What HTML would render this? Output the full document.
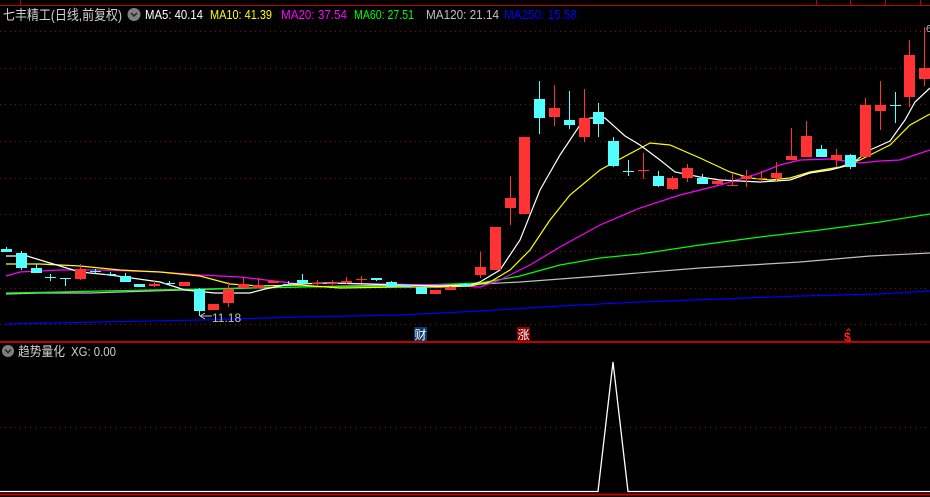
<!DOCTYPE html>
<html><head><meta charset="utf-8"><style>
html,body{margin:0;padding:0;background:#000;width:930px;height:497px;overflow:hidden}
body{font-family:"Liberation Sans","Noto Sans CJK SC",sans-serif}
svg{position:absolute;left:0;top:0}
.t{font-family:"Liberation Sans","Noto Sans CJK SC",sans-serif}
</style></head><body>
<svg id="s" width="930" height="497" xmlns="http://www.w3.org/2000/svg">
<rect width="930" height="497" fill="#000"/>
<line x1="0" y1="5.5" x2="930" y2="5.5" stroke="#c00000" stroke-width="1"/>
<line x1="816.5" y1="0" x2="816.5" y2="5" stroke="#c00000"/>
<line x1="850.5" y1="0" x2="850.5" y2="5" stroke="#c00000"/>
<line x1="885.5" y1="0" x2="885.5" y2="5" stroke="#c00000"/>
<line x1="920.5" y1="0" x2="920.5" y2="5" stroke="#c00000"/>
<line x1="20.5" y1="0" x2="20.5" y2="5" stroke="#c00000"/>
<g id="grid" stroke="#8a1010" stroke-width="1" stroke-dasharray="1,4"></g>
<text x="3" y="20" class="t" font-size="14" fill="#d0d0d0" textLength="119" lengthAdjust="spacingAndGlyphs">七丰精工(日线,前复权)</text>
<circle cx="134" cy="14.5" r="6.5" fill="#808080"/>
<path d="M131 13 L134 16 L137 13" stroke="#222" stroke-width="1.5" fill="none"/>
<text x="145" y="19" class="t" font-size="12.5" fill="#fff" textLength="58" lengthAdjust="spacingAndGlyphs">MA5: 40.14</text>
<text x="210" y="19" class="t" font-size="12.5" fill="#ffff00" textLength="62" lengthAdjust="spacingAndGlyphs">MA10: 41.39</text>
<text x="281" y="19" class="t" font-size="12.5" fill="#ff00ff" textLength="66" lengthAdjust="spacingAndGlyphs">MA20: 37.54</text>
<text x="354" y="19" class="t" font-size="12.5" fill="#00ff00" textLength="60" lengthAdjust="spacingAndGlyphs">MA60: 27.51</text>
<text x="426" y="19" class="t" font-size="12.5" fill="#c0c0c0" textLength="73" lengthAdjust="spacingAndGlyphs">MA120: 21.14</text>
<text x="504" y="19" class="t" font-size="12.5" fill="#0000ff" textLength="73" lengthAdjust="spacingAndGlyphs">MA250: 15.58</text>
<g id="ma" fill="none" stroke-width="1.2"></g>
<g id="cd"></g>
<path d="M200 316 L205 313 M200 316 L205 319 M200 316 L212 316" stroke="#c0c0c0" stroke-width="1" fill="none"/>
<text x="212" y="322" class="t" font-size="12" fill="#c0c0c0">11.18</text>
<text x="926" y="32" class="t" font-size="10" fill="#c0c0c0">6</text>
<rect x="414" y="327" width="13" height="14" fill="#0a3a6e"/>
<text x="414.5" y="339" class="t" font-size="12" fill="#fff">财</text>
<rect x="517" y="327" width="13" height="14" fill="#8a0000"/>
<text x="517.5" y="339" class="t" font-size="12" fill="#fff">涨</text>
<text x="844" y="341" class="t" font-size="12" font-weight="bold" fill="#ff2020">$</text>
<path d="M846.5 331 L848.5 329 L850.5 331" stroke="#ff2020" fill="none"/>
<line x1="0" y1="342" x2="930" y2="342" stroke="#c00000" stroke-width="2"/>
<rect x="847" y="340" width="4" height="2" fill="#f00"/>
<circle cx="8" cy="351" r="6" fill="#808080"/>
<path d="M5 349.5 L8 352.5 L11 349.5" stroke="#222" stroke-width="1.5" fill="none"/>
<text x="18" y="356" class="t" font-size="13" fill="#d0d0d0" textLength="47" lengthAdjust="spacingAndGlyphs">趋势量化</text>
<text x="71" y="356" class="t" font-size="12.5" fill="#d0d0d0" textLength="45" lengthAdjust="spacingAndGlyphs">XG: 0.00</text>
<line x1="0" y1="427.5" x2="930" y2="427.5" stroke="#8a1010" stroke-dasharray="1,4"/>
<polyline points="0,491.5 598,491.5 613,362 628,491.5 930,491.5" fill="none" stroke="#fff" stroke-width="1.3"/>
<line x1="0" y1="494.5" x2="930" y2="494.5" stroke="#c00000" stroke-width="2"/>
</svg>
<script>
var NS="http://www.w3.org/2000/svg",g=document.getElementById('grid');
[31,68,104,141,178,214,251,288,324].forEach(function(y){var l=document.createElementNS(NS,'line');l.setAttribute('x1',0);l.setAttribute('x2',930);l.setAttribute('y1',y+.5);l.setAttribute('y2',y+.5);g.appendChild(l);});
var ma={
"#c0c0c0":"6,294 40,293 90,293 150,291 250,288 300,287 400,285 480,284 520,282 600,276 700,268 800,262 870,256 930,253",
"#0000ff":"6,324 100,322 200,320 300,317 400,315 480,311 560,306 640,302 720,299 800,296 880,294 930,291",
"#00ff00":"6,293 60,292 100,291 200,289 300,287 400,286 480,283 520,276 560,265 600,258 640,254 700,245 760,237 820,230 880,222 930,214",
"#ff00ff":"6,276 20,272 60,270 100,270 160,272 200,275 240,277 300,284 330,283 380,284 440,285 480,287 500,280 530,265 560,247 600,225 640,208 680,195 720,185 760,173 780,165 800,160 830,159 860,163 880,161 900,160 930,150",
"#ffff00":"6,264 40,264 80,266 120,270 160,272 200,276 230,284 260,286 300,285 340,288 400,287 440,287 470,286 490,282 510,270 530,250 550,220 570,195 600,170 620,159 650,143 670,145 700,158 730,172 750,178 770,180 790,178 810,172 840,167 860,160 890,145 910,125 930,114",
"#ffffff":"6,256 27,256 50,263 80,272 110,275 160,282 185,290 215,293 250,293 265,289 290,284 330,283 400,285 440,286 470,285 480,282 500,270 520,240 540,190 560,155 580,125 590,118 605,118 625,136 640,145 660,160 675,172 700,177 720,180 760,182 790,180 810,173 830,170 850,165 870,150 890,141 905,120 915,102 930,88"};
var mg=document.getElementById('ma');
for(var c in ma){var p=document.createElementNS(NS,'polyline');p.setAttribute('points',ma[c]);p.setAttribute('stroke',c);mg.appendChild(p);}
var R="#ff3333",C="#54ffff";
var cds=[[1,249,252,247,252,C],[16,253,268,251,270,C],[31,268,273,264,273,C],[45,277,277,274,281,C],[60,278,279,278,286,C],[75,269,279,264,280,R],[90,271,272,269,274,C],[105,274,275,272,276,C],[120,276,282,273,282,C],[134,284,287,284,287,C],[149,284,286,280,287,R],[164,283,284,281,285,C],[179,282,286,282,286,R],[194,289,311,288,316,C],[208,304,310,304,310,R],[223,289,303,282,307,R],[238,284,288,278,288,R],[253,285,288,278,288,R],[268,281,283,281,283,R],[283,284,285,281,285,C],[297,280,284,274,285,C],[312,283,284,280,286,R],[327,283,284,280,285,R],[341,281,283,277,284,R],[356,279,280,276,283,R],[371,278,280,278,281,C],[386,282,287,281,287,C],[401,285,287,285,287,C],[416,287,294,287,294,C],[430,290,294,290,294,R],[445,287,290,286,290,R],[460,284,286,283,287,C],[475,267,275,252,278,R],[490,227,270,227,270,R],[505,198,208,176,225,R],[519,137,214,137,214,R],[534,99,118,81,134,C],[549,108,117,85,126,R],[564,120,125,91,129,C],[579,118,137,89,142,R],[593,112,124,103,137,C],[608,141,166,137,167,C],[623,171,172,160,176,C],[638,170,171,153,179,R],[653,176,186,171,187,C],[667,178,189,176,190,R],[682,168,178,164,182,R],[697,178,184,174,184,C],[712,181,184,180,185,R],[727,185,186,173,186,R],[741,176,179,170,187,R],[756,178,179,171,181,R],[771,173,178,162,181,R],[786,156,160,128,160,R],[801,136,157,121,157,R],[816,149,157,145,157,C],[831,155,160,149,167,R],[845,155,167,154,169,C],[860,105,157,98,157,R],[875,105,111,81,130,R],[890,105,106,92,123,C],[904,55,97,40,107,R],[919,68,79,27,86,R]];
var cg=document.getElementById('cd');
cds.forEach(function(d){var x=d[0],w=11,cx=x+5.5;
var l=document.createElementNS(NS,'line');l.setAttribute('x1',cx);l.setAttribute('x2',cx);l.setAttribute('y1',d[3]);l.setAttribute('y2',d[4]);l.setAttribute('stroke',d[5]);cg.appendChild(l);
var r=document.createElementNS(NS,'rect');r.setAttribute('x',x);r.setAttribute('width',w);r.setAttribute('y',d[1]);r.setAttribute('height',Math.max(1,d[2]-d[1]));r.setAttribute('fill',d[5]);cg.appendChild(r);});
</script>
</body></html>
